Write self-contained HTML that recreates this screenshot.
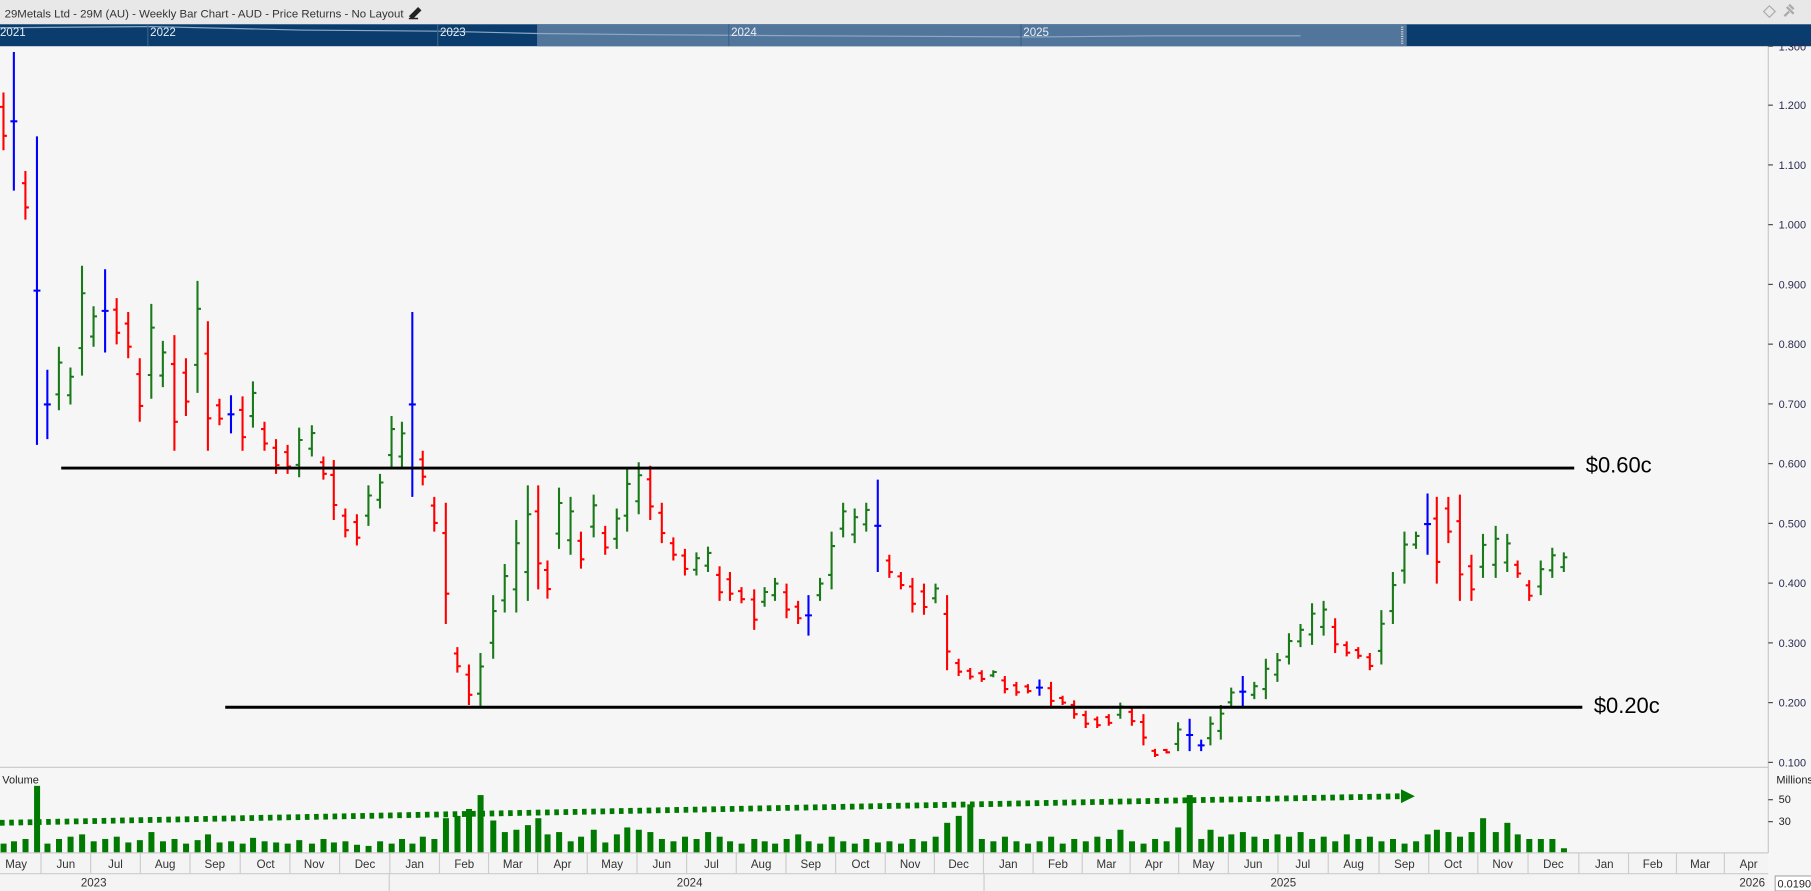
<!DOCTYPE html>
<html><head><meta charset="utf-8"><style>
html,body{margin:0;padding:0;background:#f6f6f6;overflow:hidden}
svg{display:block}
text{font-family:"Liberation Sans",sans-serif}
</style></head><body>
<svg id="s" width="1811" height="891" viewBox="0 0 1568 771" preserveAspectRatio="none" xmlns="http://www.w3.org/2000/svg">
<rect width="1568" height="771" fill="#f6f6f6"/>
<rect width="1568" height="21" fill="#e8e8e8"/>
<text x="4" y="15" font-size="9.9" fill="#333">29Metals Ltd - 29M (AU) - Weekly Bar Chart - AUD - Price Returns - No Layout</text>
<path d="M355 14 l7 -7 l2 2 l-7 7 z M354 16 h8" stroke="#222" stroke-width="1.3" fill="#222"/>
<path d="M1527 10 l5 -5 l5 5 l-5 5 z" fill="none" stroke="#aaa"/>
<path d="M1545 14 l4 -4 M1547 6 l6 6 M1549 4 l4 4" stroke="#aaa" stroke-width="2"/>
<rect y="21" width="1568" height="19" fill="#0a3d6e"/>
<rect x="465" y="21" width="753" height="19" fill="#52769b"/>
<polyline points="0,24 130,23 260,26 381,27 465,29 560,30 700,31 900,32 1000,31 1126,31" fill="none" stroke="#8fa9c4" stroke-width="1"/>
<g stroke="#3b628a"><line x1="128" y1="21" x2="128" y2="40"/><line x1="379" y1="21" x2="379" y2="40"/><line x1="631" y1="21" x2="631" y2="40"/><line x1="884" y1="21" x2="884" y2="40"/></g>
<line x1="1214" y1="23" x2="1214" y2="38" stroke="#ccc" stroke-width="2" stroke-dasharray="1,1"/>
<g font-size="10" fill="#e8eef5"><text x="0" y="31">2021</text><text x="130" y="31">2022</text><text x="381" y="31">2023</text><text x="633" y="31">2024</text><text x="886" y="31">2025</text></g>
<line x1="1531" y1="40" x2="1531" y2="738" stroke="#c8c8c8"/>
<line x1="0" y1="664" x2="1531" y2="664" stroke="#c8c8c8"/>
<g id="bars"></g>
<g id="vol"></g>
<g id="axis" font-size="9.5" fill="#2a2a50"></g>
<line x1="53" y1="405" x2="1363" y2="405" stroke="#000" stroke-width="2.5"/>
<text x="1373" y="409" font-size="19" fill="#000">$0.60c</text>
<line x1="195" y1="612" x2="1370" y2="612" stroke="#000" stroke-width="2.5"/>
<text x="1380" y="617" font-size="19" fill="#000">$0.20c</text>
<polyline points="0,712 1213,689" fill="none" stroke="#007a00" stroke-width="5" stroke-dasharray="4,4"/>
<path d="M1213 683 l12 6 l-12 6 z" fill="#007a00"/>
<text x="2" y="678" font-size="9.5" fill="#222">Volume</text>
<text x="1538" y="678" font-size="9.5" fill="#222">Millions</text>
<g stroke="#444"><line x1="1531" y1="692" x2="1535" y2="692"/><line x1="1531" y1="711" x2="1535" y2="711"/></g>
<text x="1540" y="695" font-size="9.5" fill="#222">50</text>
<text x="1540" y="714" font-size="9.5" fill="#222">30</text>
<rect x="0" y="738" width="1531" height="33" fill="#f4f4f4"/>
<line x1="0" y1="738" x2="1531" y2="738" stroke="#ccc"/>
<line x1="0" y1="756" x2="1531" y2="756" stroke="#ccc"/>
<g id="months" font-size="10" fill="#333"></g>
<g font-size="10" fill="#333"><text x="70" y="767">2023</text><text x="586" y="767">2024</text><text x="1100" y="767">2025</text><text x="1506" y="767">2026</text></g>
<g stroke="#ccc"><line x1="337" y1="756" x2="337" y2="771"/><line x1="852" y1="756" x2="852" y2="771"/></g>
<rect x="1537" y="758" width="40" height="13" fill="#fff" stroke="#aaa"/>
<text x="1539" y="768" font-size="9.5" fill="#222">0.0190</text>
</svg>
<script>
var NS="http://www.w3.org/2000/svg";
function el(p,t,a,txt){var e=document.createElementNS(NS,t);for(var k in a)e.setAttribute(k,a[k]);if(txt)e.textContent=txt;p.appendChild(e);return e;}
var d=[[3,80,130,'r'],[12,45,165,'b'],[22,148,190,'r'],[32,118,385,'b'],[41,320,380,'b'],[51,300,355,'g'],[61,318,350,'g'],[71,230,325,'g'],[81,265,300,'g'],[91,233,305,'b'],[101,258,298,'r'],[111,270,310,'r'],[121,310,365,'r'],[131,263,345,'g'],[141,295,335,'g'],[151,290,390,'r'],[161,310,360,'r'],[171,243,340,'g'],[180,278,390,'r'],[190,345,368,'r'],[200,342,375,'b'],[210,343,390,'r'],[219,330,370,'g'],[229,365,390,'r'],[239,380,410,'r'],[249,385,410,'r'],[259,370,413,'g'],[270,368,395,'g'],[280,395,415,'r'],[289,398,450,'r'],[299,440,465,'r'],[309,445,472,'r'],[319,420,455,'g'],[329,410,440,'g'],[339,360,405,'g'],[348,365,405,'g'],[357,270,430,'b'],[366,390,420,'r'],[376,430,460,'r'],[386,435,540,'r'],[396,560,582,'r'],[406,575,610,'r'],[416,565,612,'g'],[427,515,570,'g'],[437,488,530,'g'],[447,450,530,'g'],[457,420,520,'g'],[466,420,510,'r'],[474,485,518,'r'],[484,422,475,'g'],[494,430,480,'g'],[503,460,492,'r'],[514,428,465,'g'],[524,455,480,'r'],[534,440,475,'g'],[543,405,460,'g'],[553,400,445,'g'],[563,403,450,'r'],[573,435,470,'r'],[583,465,485,'r'],[593,475,498,'r'],[603,478,498,'g'],[613,473,495,'g'],[623,490,520,'r'],[632,495,520,'r'],[642,508,522,'r'],[653,510,545,'r'],[662,508,525,'g'],[671,500,520,'g'],[681,505,535,'r'],[691,520,540,'r'],[700,515,550,'b'],[710,500,520,'g'],[720,460,510,'g'],[730,435,465,'g'],[740,440,470,'g'],[750,435,460,'g'],[760,415,495,'b'],[770,480,500,'r'],[780,495,510,'r'],[790,500,530,'r'],[800,505,532,'r'],[810,505,522,'g'],[820,515,580,'r'],[830,570,585,'r'],[840,578,588,'r'],[850,580,590,'r'],[860,580,586,'g'],[870,585,600,'r'],[880,590,602,'r'],[890,592,600,'r'],[900,588,602,'b'],[910,590,612,'r'],[920,602,610,'r'],[930,606,622,'r'],[940,615,630,'r'],[950,620,630,'r'],[960,618,628,'r'],[970,608,622,'g'],[980,612,628,'r'],[990,618,645,'r'],[1000,648,655,'r'],[1010,648,652,'r'],[1020,625,650,'g'],[1030,622,650,'b'],[1040,640,650,'b'],[1048,620,645,'g'],[1057,610,640,'g'],[1066,595,612,'g'],[1076,585,612,'b'],[1086,590,605,'g'],[1096,570,605,'g'],[1106,565,590,'g'],[1116,548,575,'g'],[1126,540,560,'g'],[1136,522,558,'g'],[1146,520,550,'g'],[1156,535,565,'r'],[1166,555,568,'r'],[1176,560,570,'r'],[1186,565,580,'r'],[1196,528,575,'g'],[1206,495,540,'g'],[1216,460,505,'g'],[1226,460,475,'g'],[1236,427,480,'b'],[1244,430,505,'r'],[1254,430,470,'r'],[1264,428,520,'r'],[1274,480,520,'r'],[1284,462,500,'g'],[1295,455,500,'g'],[1305,462,495,'g'],[1314,485,500,'r'],[1324,502,520,'r'],[1334,485,515,'g'],[1344,474,500,'g'],[1354,478,495,'g']];
var col={r:'#ff0000',g:'#1a7a1a',b:'#0000ff'};
var B=document.getElementById('bars');
d.forEach(function(b){var x=b[0],h=b[1],l=b[2],c=col[b[3]],r=l-h,o,cl;
if(b[3]=='g'){o=h+r*0.75;cl=h+r*0.25}else if(b[3]=='r'){o=h+r*0.25;cl=h+r*0.75}else{o=h+r*0.5;cl=h+r*0.5}
el(B,'path',{d:'M'+x+' '+h+'V'+l+'M'+(x-3)+' '+o+'H'+x+'M'+x+' '+cl+'H'+(x+3),stroke:c,'stroke-width':1.8,fill:'none'});});
var V=document.getElementById('vol');
var vh=[8,10,12,58,8,12,14,16,10,12,14,9,11,18,10,12,8,11,16,9,10,8,13,10,9,8,11,8,12,9,10,7,6,10,8,12,8,14,30,32,38,50,28,18,20,24,30,16,18,10,14,20,9,16,22,20,18,12,10,14,12,18,14,10,8,12,10,8,12,16,10,8,14,10,8,12,9,10,8,12,10,14,26,32,42,12,10,14,10,8,10,14,8,12,10,14,12,20,10,8,12,10,22,20,12,10,50,16,18,14,12,16,14,18,12,14,10,16,12,14,10,12,8,10,16,20,18,14,18,30,18,26,16,12,12,12,10,14,14,3];
vh.splice(38,0,12);vh[104]=50;vh[107]=14;vh[106]=20;
for(var i=0;i<d.length;i++){var x=d[i][0],h=(i==d.length-1)?4:vh[i];el(V,'rect',{x:x-2.5,y:738-h,width:5.2,height:h,fill:'#007a00'});}
var A=document.getElementById('axis');
for(var i=0;i<13;i++){var p=1.3-i*0.1,y=91+(1.2-p)*517;if(y<40)y=40;
el(A,'line',{x1:1531,y1:y,x2:1535,y2:y,stroke:'#444'});
el(A,'text',{x:1540,y:y+3.5},p.toFixed(3));}
var M=document.getElementById('months');
var mn=['May','Jun','Jul','Aug','Sep','Oct','Nov','Dec','Jan','Feb','Mar','Apr','May','Jun','Jul','Aug','Sep','Oct','Nov','Dec','Jan','Feb','Mar','Apr','May','Jun','Jul','Aug','Sep','Oct','Nov','Dec','Jan','Feb','Mar','Apr'];
var mx=[14,57,100,143,186,230,272,316,359,402,444,487,530,573,616,659,702,745,788,830,873,916,958,999,1042,1085,1128,1172,1216,1258,1301,1345,1389,1431,1472,1514];
for(var i=0;i<mn.length;i++){el(M,'text',{x:mx[i],y:751,'text-anchor':'middle'},mn[i]);
if(i<mn.length-1){var sx=(mx[i]+mx[i+1])/2;el(M,'line',{x1:sx,y1:738,x2:sx,y2:756,stroke:'#ccc'});}}
</script>
</body></html>
